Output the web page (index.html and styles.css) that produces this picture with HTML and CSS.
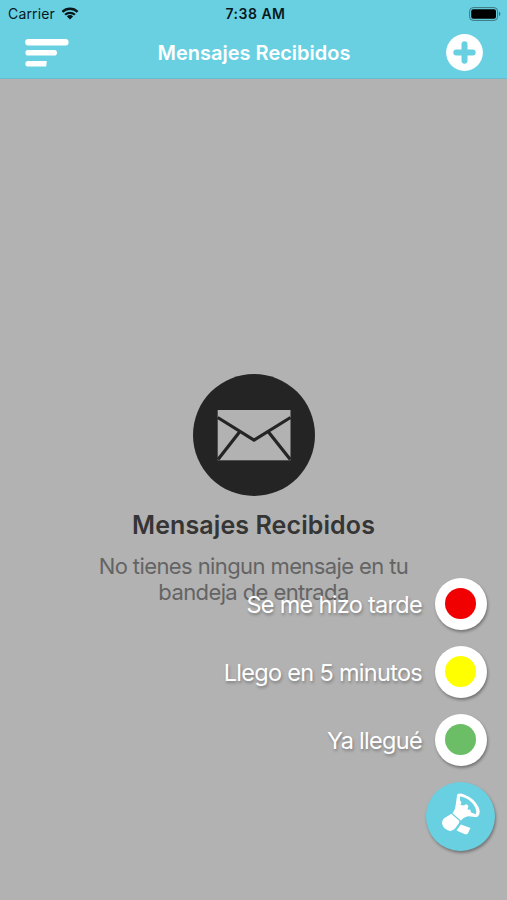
FILE: index.html
```html
<!DOCTYPE html>
<html lang="es">
<head>
  <meta charset="UTF-8" />
  <meta name="viewport" content="width=device-width, initial-scale=1.0"/>
  <title>Mensajes Recibidos</title>
  <link rel="stylesheet" href="styles.css">
</head>
<body>

  <header class="header">
    <div class="status-bar">
      <div class="carrier">
        <span>Carrier</span>
        <svg class="wifi" viewBox="0 0 18 13" width="18" height="13">
          <path d="M1.4 4.9a10.8 10.8 0 0 1 15.2 0M4.1 7.8a7 7 0 0 1 9.8 0" fill="none" stroke="#08191d" stroke-width="2.3"/>
          <path d="M9 12.4L5.9 9.4a4.4 4.4 0 0 1 6.2 0z" fill="#08191d"/>
        </svg>
      </div>
      <span class="time">7:38 AM</span>
      <svg class="battery" viewBox="0 0 32 14" width="32" height="14">
        <rect x="0.6" y="0.6" width="28" height="12.8" rx="3.6" fill="none" stroke="#3c757f" stroke-width="1"/>
        <rect x="2.2" y="2.2" width="24.8" height="9.6" rx="2" fill="#000"/>
        <path d="M30 4.8c1.8.5 1.8 3.9 0 4.4z" fill="#3c757f"/>
      </svg>
    </div>
    <nav class="nav-bar">
      <svg class="menu" viewBox="0 0 44 28" width="44" height="28">
        <path d="M3.2 0H40.6A3 3.2 0 0 1 40.6 6.4H3.2A3 3.2 0 0 1 3.2 0zM3 11H29.4A2.6 2.8 0 0 1 29.4 16.6H3A2.6 2.8 0 0 1 3 11zM3 22H21.8L21.2 27.6H3A2.6 2.8 0 0 1 3 22z" fill="#fff"/>
      </svg>
      <h1 class="nav-title">Mensajes Recibidos</h1>
      <svg class="add" viewBox="0 0 37 37" width="37" height="37">
        <circle cx="18.5" cy="18.5" r="18.4" fill="#fff"/>
        <path d="M18.5 10.3v16.4M10.3 18.5h16.4" stroke="#69d0e2" stroke-width="6" stroke-linecap="round"/>
      </svg>
    </nav>
  </header>

  <main class="empty">
    <svg class="mail" viewBox="0 0 122 122" width="122" height="122">
      <circle cx="61" cy="61" r="61" fill="#242424"/>
      <rect x="24.7" y="36" width="72.8" height="50.3" fill="#b2b2b2"/>
      <path d="M24.7 43.5L61 66.2L97.5 43.5M46.5 58L25 85.5M75.5 58L97.3 85.5" fill="none" stroke="#242424" stroke-width="3.2"/>
    </svg>
    <h2 class="empty-title">Mensajes Recibidos</h2>
    <p class="empty-text">No tienes ningun mensaje en tu<br>bandeja de entrada</p>
  </main>

  <div class="fab-menu">
    <div class="fab-item">
      <span class="fab-label">Se me hizo tarde</span>
      <button class="fab-dot"><span class="dot red"></span></button>
    </div>
    <div class="fab-item">
      <span class="fab-label">Llego en 5 minutos</span>
      <button class="fab-dot"><span class="dot yellow"></span></button>
    </div>
    <div class="fab-item">
      <span class="fab-label">Ya llegué</span>
      <button class="fab-dot"><span class="dot green"></span></button>
    </div>
    <button class="fab-main">
      <svg viewBox="48 37 208 208" width="69" height="69">
        <path fill="#fff" fill-rule="evenodd" d="M142 75Q149 69 163 75Q194 87 207 114Q214 131 205 140Q200 144 190 142L174 140Q162 143 153 153L128 131Q138 117 138 103ZM151 81L150 91L155 99L152 106L162 108L170 103L176 109L173 121L181 120L184 129L198 134Q204 121 188 101Q171 83 151 81Z"/>
        <path fill="#fff" d="M122 134Q126 133 129 137L148 154Q150 157 147 161L135 178Q121 191 106 178Q91 165 99 151Q103 145 110 142ZM153 165L182 176L174 192Q170 196 164 194L140 183Z"/>
      </svg>
    </button>
  </div>

</body>
</html>
```

FILE: styles.css
```css
* {
  box-sizing: border-box;
}
body {
  font-family: Inter, 'Liberation Sans', sans-serif;
  background-color: #b2b2b2;
  margin: 0;
  height: 900px;
  position: relative;
  overflow: hidden;
}
.header {
  height: 79px;
  background-color: #69d0e2;
  border-bottom: 1px solid #68bccb;
}
.status-bar {
  height: 27px;
  padding: 0 6px 0 8px;
  display: grid;
  grid-template-columns: 1fr auto 1fr;
  align-items: center;
  color: #08191d;
  font-size: 14px;
  letter-spacing: 0.15px;
}
.carrier {
  display: flex;
  align-items: center;
  gap: 6px;
}
.time {
  font-weight: 600;
  letter-spacing: 0.5px;
  padding-left: 2px;
}
.battery {
  justify-self: end;
}
.nav-bar {
  height: 51px;
  padding: 0 24px 0 25px;
  display: grid;
  grid-template-columns: 1fr auto 1fr;
  align-items: center;
}
.nav-title {
  margin: 0;
  color: white;
  font-size: 20px;
  font-weight: 600;
  white-space: nowrap;
}
.add {
  justify-self: end;
}
.empty {
  padding-top: 295px;
  text-align: center;
}
.mail {
  display: block;
  margin: 0 auto;
}
.empty-title {
  margin: 13px 0 0;
  color: #353535;
  font-size: 25px;
  line-height: 32px;
  font-weight: 600;
  letter-spacing: 0.1px;
}
.empty-text {
  margin: 12px 0 0;
  color: #646464;
  font-size: 22px;
  line-height: 26px;
  letter-spacing: -0.6px;
}
.fab-menu {
  position: absolute;
  right: 12px;
  bottom: 49px;
  display: flex;
  flex-direction: column;
  align-items: flex-end;
  gap: 16px;
}
.fab-item {
  display: flex;
  align-items: center;
  gap: 13px;
  padding-right: 8px;
}
.fab-label {
  color: white;
  font-size: 23.5px;
  letter-spacing: -0.7px;
  text-shadow: 1px 2px 3px rgba(0, 0, 0, 0.3);
}
.fab-dot,
.fab-main {
  display: flex;
  align-items: center;
  justify-content: center;
  padding: 0;
  border: none;
  border-radius: 50%;
  cursor: pointer;
  box-shadow: 1px 2px 3px rgba(0, 0, 0, 0.35);
}
.fab-dot {
  width: 52px;
  height: 52px;
  padding: 0 1px 1px 0;
  background-color: white;
}
.dot {
  width: 31px;
  height: 31px;
  border-radius: 50%;
}
.red {
  background-color: #f00000;
}
.yellow {
  background-color: #ffff00;
}
.green {
  background-color: #6bbe66;
}
.fab-main {
  width: 69px;
  height: 69px;
  background-color: #69d0e2;
}
```
